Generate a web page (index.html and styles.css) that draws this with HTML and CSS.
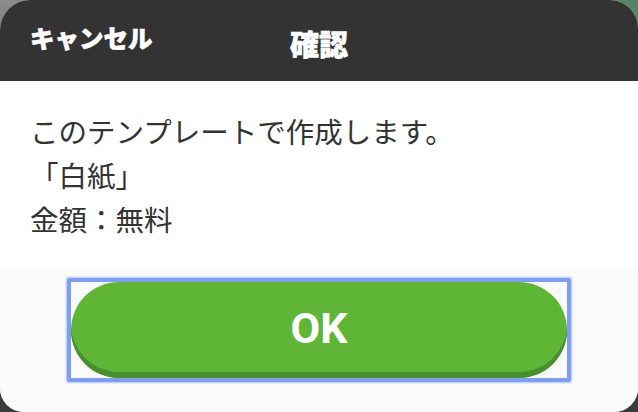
FILE: index.html
```html
<!DOCTYPE html>
<html lang="ja">
<head>
<meta charset="utf-8">
<title>確認</title>
<link rel="stylesheet" href="styles.css">
</head>
<body>
<div class="dialog">
  <header class="dialog-header">
    <span class="cancel">キャンセル</span>
    <span class="title">確認</span>
    <span class="spacer"></span>
  </header>
  <main class="dialog-body">
    <p class="line">このテンプレートで作成します。</p>
    <p class="line">「白紙」</p>
    <p class="line">金額：無料</p>
  </main>
  <footer class="dialog-footer">
    <div class="focus-ring">
      <button class="ok-btn">OK</button>
    </div>
  </footer>
</div>
</body>
</html>
```
FILE: styles.css
```css
* { box-sizing: border-box; }
html, body {
  margin: 0;
  padding: 0;
  width: 638px;
  height: 412px;
  overflow: hidden;
}
body {
  background:
    linear-gradient(90deg, rgba(140,140,140,0) 0%, rgba(80,130,100,0.9) 100%) top / 100% 60px no-repeat,
    linear-gradient(180deg, #8c8c8c 0%, #666666 20%, #3e3e3e 80%, #3a3a3a 100%);
  font-family: "Noto Sans CJK JP", "Noto Sans", sans-serif;
}
.dialog {
  width: 638px;
  height: 412px;
  border-radius: 30px 28px 24px 24px;
  overflow: hidden;
  display: flex;
  flex-direction: column;
  background: #fafafa;
}
.dialog-header {
  height: 81px;
  background: #333333;
  color: #ffffff;
  display: grid;
  grid-template-columns: 1fr auto 1fr;
  align-items: center;
  padding: 0 30px;
}
.cancel {
  font-size: 24.5px;
  font-weight: 900;
  line-height: 1;
  padding-bottom: 4px;
  justify-self: start;
  -webkit-text-stroke: 0.6px #ffffff;
}
.title {
  font-size: 29px;
  font-weight: 900;
  line-height: 1;
  padding-top: 6px;
  -webkit-text-stroke: 0.6px #ffffff;
}
.dialog-body {
  background: #ffffff;
  padding: 28px 30px 29px;
  color: #333333;
}
.line {
  margin: 0;
  font-size: 28.5px;
  line-height: 44px;
  font-weight: 400;
}
.dialog-footer {
  flex: 1;
  background: #fafafa;
  display: flex;
  justify-content: center;
  align-items: flex-start;
  padding-top: 8px;
}
.focus-ring {
  border: 4px solid #7e9ff0;
  border-radius: 2px;
  box-shadow: 0 0 2px 1px rgba(126, 159, 240, 0.6);
  line-height: 0;
}
.ok-btn {
  width: 496px;
  height: 96px;
  border: none;
  border-radius: 48px;
  background: #5fb636;
  box-shadow: inset 0 -6px 0 #488f2f;
  color: #ffffff;
  font-family: Roboto, "Noto Sans", sans-serif;
  font-weight: 700;
  font-size: 43px;
  line-height: 1;
  padding: 0 0 4px;
  cursor: pointer;
}
```
